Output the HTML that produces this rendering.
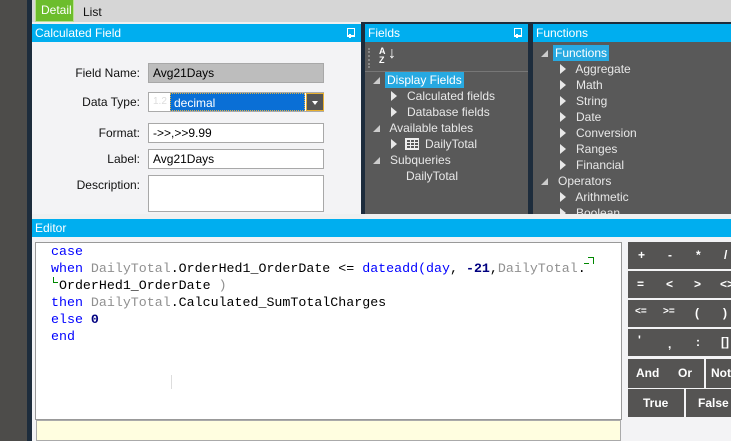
<!DOCTYPE html>
<html><head><meta charset="utf-8"><style>
*{margin:0;padding:0;box-sizing:border-box}
body{width:731px;height:441px;overflow:hidden;position:relative;background:#f0f0f0;font-family:"Liberation Sans",sans-serif;font-size:12px}
.a{position:absolute}
.hdr{background:#00aeef;color:#fff;font-size:12px;line-height:18px;padding-left:3px}
.lbl{position:absolute;text-align:right;width:110px;left:30px;color:#111;font-size:12px}
.inp{position:absolute;left:148px;width:176px;height:20px;border:1px solid #a8a8a8;background:#fff;font-size:12px;padding-left:4px;line-height:18px}
.tree{color:#e8e8e8;font-size:12px;position:absolute;line-height:16px}
.tri{display:inline-block;width:0;height:0;border-left:6px solid #e8e8e8;border-top:5px solid transparent;border-bottom:5px solid transparent;vertical-align:-1px}
.ex{display:inline-block;width:0;height:0;border-right:7px solid #ccc;border-top:7px solid transparent;vertical-align:0}
.code{font-family:"Liberation Mono",monospace;font-size:13.3px;line-height:17px;position:absolute;left:51px;top:243px;white-space:pre;color:#000}
.k{color:#0000ff}.g{color:#909090}.n{color:#000080;font-weight:bold}
.btn{position:absolute;background:#555453;color:#fff;font-weight:bold;font-size:12px}
.btn span{position:absolute}
.pin{position:absolute;right:8px;top:4px;width:6px;height:10px}
.pin:before{content:"";position:absolute;left:0;top:0;width:6px;height:6px;border:1px solid #fff;border-bottom:2px solid #fff}
.pin:after{content:"";position:absolute;left:2px;top:6px;width:2px;height:4px;background:#fff}
</style></head><body>
<div class="a" style="left:0;top:0;width:27px;height:441px;background:#4d4c4a"></div>
<div class="a" style="left:27px;top:0;width:5px;height:441px;background:#1d2c3c"></div>
<div class="a" style="left:32px;top:0;width:699px;height:22px;background:#d6d6d6"></div>
<div class="a" style="left:35px;top:0;width:39px;height:22px;background:#6cbd2c;color:#fff;border:1px solid #b8e090;border-top:none;padding-left:5px;line-height:20px">Detail</div>
<div class="a" style="left:83px;top:4px;color:#111;line-height:16px">List</div>
<div class="a hdr" style="left:32px;top:24px;width:329px;height:18px">Calculated Field<span class="pin"></span></div>
<div class="a" style="left:32px;top:42px;width:329px;height:172px;background:#f3f3f5"></div>
<div class="lbl" style="top:66px">Field Name:</div>
<div class="inp" style="top:63px;background:#bdbdbd">Avg21Days</div>
<div class="lbl" style="top:95px">Data Type:</div>
<div class="inp" style="top:92px;padding:0;border-color:#aaa">
<span class="a" style="left:4px;top:0;color:#ddd;font-size:10px">1.2</span>
<span class="a" style="left:21px;top:0;width:135px;height:18px;background:#0a6fd6;color:#fff;padding-left:3px;border:1px dotted #e0b040">decimal</span>
<span class="a" style="left:157px;top:0;width:18px;height:18px;background:#555;border:1px solid #e8b030"><span class="a" style="left:5px;top:7px;border-top:4px solid #fff;border-left:3px solid transparent;border-right:3px solid transparent"></span></span></div>
<div class="lbl" style="top:126px">Format:</div>
<div class="inp" style="top:123px">-&gt;&gt;,&gt;&gt;9.99</div>
<div class="lbl" style="top:152px">Label:</div>
<div class="inp" style="top:149px">Avg21Days</div>
<div class="lbl" style="top:178px">Description:</div>
<div class="inp" style="top:175px;height:37px"></div>
<div class="a" style="left:361px;top:22px;width:370px;height:193px;background:#1d2c3c"></div>
<div class="a hdr" style="left:365px;top:24px;width:163px;height:18px">Fields<span class="pin"></span></div>
<div class="a" style="left:365px;top:42px;width:163px;height:172px;background:#595959"></div>
<div class="a" style="left:368px;top:48px;width:2px;height:20px;border-left:2px dotted #888"></div>
<div class="a" style="left:379px;top:47px;color:#fff;font-size:9px;line-height:9px;font-weight:bold">A<br>Z</div>
<div class="a" style="left:388px;top:45px;color:#fff;font-size:16px">↓</div>
<div class="a" style="left:365px;top:71px;width:163px;height:1px;background:#777"></div>
<div class="tree" style="left:373px;top:72px"><span class="ex"></span></div>
<div class="a" style="left:385px;top:72px;background:#27a9e1;color:#fff;padding:0 2px;line-height:16px">Display Fields</div>
<div class="tree" style="left:391px;top:88px"><span class="tri"></span>&nbsp;&nbsp; Calculated fields</div>
<div class="tree" style="left:391px;top:104px"><span class="tri"></span>&nbsp;&nbsp; Database fields</div>
<div class="tree" style="left:373px;top:120px"><span class="ex"></span>&nbsp;&nbsp; Available tables</div>
<div class="tree" style="left:391px;top:136px"><span class="tri"></span></div>
<div class="a" style="left:405px;top:138px;width:14px;height:12px;border:1px solid #eee;background:repeating-linear-gradient(90deg,#eee 0 1px,transparent 1px 4px),repeating-linear-gradient(0deg,#eee 0 1px,transparent 1px 3px)"></div>
<div class="tree" style="left:425px;top:136px">DailyTotal</div>
<div class="tree" style="left:373px;top:152px"><span class="ex"></span>&nbsp;&nbsp; Subqueries</div>
<div class="tree" style="left:406px;top:168px">DailyTotal</div>
<div class="a hdr" style="left:533px;top:24px;width:198px;height:18px">Functions</div>
<div class="a" style="left:533px;top:42px;width:198px;height:172px;background:#595959"></div>
<div class="tree" style="left:541px;top:45px"><span class="ex"></span></div>
<div class="a" style="left:553px;top:45px;background:#27a9e1;color:#fff;padding:0 2px;line-height:16px">Functions</div>
<div class="tree" style="left:560px;top:61px;line-height:16px"><span class="tri"></span>&nbsp;&nbsp; Aggregate<br><span class="tri"></span>&nbsp;&nbsp; Math<br><span class="tri"></span>&nbsp;&nbsp; String<br><span class="tri"></span>&nbsp;&nbsp; Date<br><span class="tri"></span>&nbsp;&nbsp; Conversion<br><span class="tri"></span>&nbsp;&nbsp; Ranges<br><span class="tri"></span>&nbsp;&nbsp; Financial</div>
<div class="tree" style="left:541px;top:173px"><span class="ex"></span>&nbsp;&nbsp; Operators</div>
<div class="tree" style="left:560px;top:189px;height:25px;overflow:hidden"><span class="tri"></span>&nbsp;&nbsp; Arithmetic<br><span class="tri"></span>&nbsp;&nbsp; Boolean</div>
<div class="a" style="left:32px;top:214px;width:699px;height:5px;background:#f0f0f0"></div>
<div class="a hdr" style="left:32px;top:219px;width:699px;height:18px">Editor</div>
<div class="a" style="left:32px;top:237px;width:699px;height:204px;background:#f3f3f5"></div>
<div class="a" style="left:35px;top:242px;width:587px;height:178px;background:#fff;border:1px solid #999"></div>
<div class="a" style="left:36px;top:420px;width:585px;height:21px;background:#fffee0;border:1px solid #aaa"></div>
<div class="code"><span class="k">case</span>
<span class="k">when</span> <span class="g">DailyTotal</span>.OrderHed1_OrderDate &lt;= <span class="k">dateadd(day</span>, <span class="n">-21</span>,<span class="g">DailyTotal</span>.
 OrderHed1_OrderDate <span class="g">)</span>
<span class="k">then</span> <span class="g">DailyTotal</span>.Calculated_SumTotalCharges
<span class="k">else</span> <span class="n">0</span>
<span class="k">end</span></div>
<div class="a" style="left:588px;top:257px;width:6px;height:7px;border-top:1px solid #080;border-right:1px solid #080"></div>
<div class="a" style="left:584px;top:263px;width:5px;height:1px;background:#080"></div>
<div class="a" style="left:53px;top:277px;width:5px;height:6px;border-left:1px solid #080;border-bottom:1px solid #080"></div>
<div class="a" style="left:171px;top:375px;width:1px;height:14px;background:#ddd"></div>
<div class="btn" style="left:628px;top:242px;width:103px;height:27px"><span style="left:10px;top:6px">+</span><span style="left:40px;top:6px">-</span><span style="left:68px;top:6px">*</span><span style="left:96px;top:6px">/</span></div>
<div class="btn" style="left:628px;top:271px;width:103px;height:27px"><span style="left:9px;top:6px">=</span><span style="left:38px;top:6px">&lt;</span><span style="left:66px;top:6px">&gt;</span><span style="left:92px;top:6px">&lt;&gt;</span></div>
<div class="btn" style="left:628px;top:300px;width:103px;height:27px"><span style="left:7px;top:6px;font-size:10px">&lt;=</span><span style="left:35px;top:6px;font-size:10px">&gt;=</span><span style="left:67px;top:6px">(</span><span style="left:95px;top:6px">)</span></div>
<div class="btn" style="left:628px;top:329px;width:103px;height:27px"><span style="left:10px;top:4px">'</span><span style="left:40px;top:8px">,</span><span style="left:68px;top:6px">:</span><span style="left:93px;top:6px">[]</span></div>
<div class="btn" style="left:628px;top:359px;width:76px;height:29px"><span style="left:8px;top:7px">And</span><span style="left:50px;top:7px">Or</span></div>
<div class="btn" style="left:706px;top:359px;width:25px;height:29px"><span style="left:5px;top:7px">Not</span></div>
<div class="btn" style="left:628px;top:389px;width:56px;height:28px"><span style="left:15px;top:7px">True</span></div>
<div class="btn" style="left:686px;top:389px;width:45px;height:28px"><span style="left:12px;top:7px">False</span></div>
</body></html>
